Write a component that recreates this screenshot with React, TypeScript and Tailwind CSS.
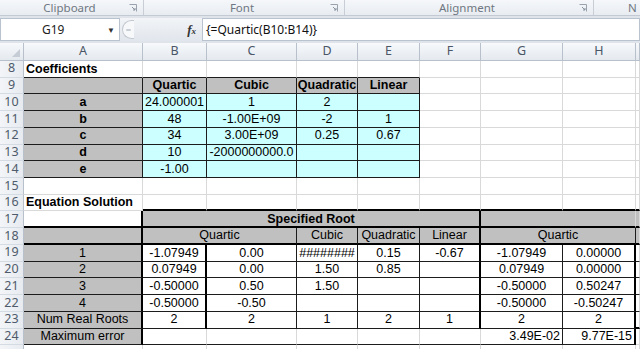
import React from "react";

type Cell = {
  t?: string;
  s?: number;
  bg?: "g" | "c" | "w";
  b?: boolean;
  al?: "l" | "c" | "r";
  r?: 0 | 1 | 2;
  d?: 0 | 1 | 2;
};

const RIGHT = [
  "border-r border-r-[#d9d9d9]",
  "border-r border-r-[#1c1c1c]",
  "border-r-2 border-r-black",
];
const BOTTOM = [
  "border-b border-b-[#d9d9d9]",
  "border-b border-b-[#1c1c1c]",
  "border-b-2 border-b-black",
];
const BG = { g: "bg-[#c0c0c0]", c: "bg-[#ccffff]", w: "bg-white" };
const ALIGN = { l: "justify-start pl-[2px]", c: "justify-center", r: "justify-end pr-[2px]" };

const e = (n: number, d: 0 | 1 | 2 = 0): Cell[] => Array.from({ length: n }, () => ({ d }));

// rows 8..25, each row covers columns A..H plus the sliver of I
const rows: { n: number; cells: Cell[] }[] = [
  { n: 8, cells: [{ t: "Coefficients", b: true, al: "l", d: 1 }, { d: 1 }, { d: 1 }, { d: 1 }, { d: 1 }, ...e(4)] },
  {
    n: 9,
    cells: [
      { bg: "g", r: 1, d: 1 },
      { t: "Quartic", bg: "g", b: true, r: 1, d: 1 },
      { t: "Cubic", bg: "g", b: true, r: 1, d: 1 },
      { t: "Quadratic", bg: "g", b: true, r: 1, d: 1 },
      { t: "Linear", bg: "g", b: true, r: 1, d: 1 },
      ...e(4),
    ],
  },
  ...[
    ["a", "24.000001", "1", "2", ""],
    ["b", "48", "-1.00E+09", "-2", "1"],
    ["c", "34", "3.00E+09", "0.25", "0.67"],
    ["d", "10", "-2000000000.0", "", ""],
    ["e", "-1.00", "", "", ""],
  ].map((v, i) => ({
    n: 10 + i,
    cells: [
      { t: v[0], bg: "g", b: true, r: 1, d: 1 } as Cell,
      ...v.slice(1).map((t) => ({ t, bg: "c", r: 1, d: 1 }) as Cell),
      ...e(4),
    ],
  })),
  { n: 15, cells: e(9) },
  { n: 16, cells: [{ t: "Equation Solution", b: true, al: "l", d: 0 }, ...e(8, 2)] },
  {
    n: 17,
    cells: [
      { r: 2, d: 2 },
      { t: "Specified Root", s: 5, bg: "g", b: true, r: 2, d: 2 },
      { s: 2, bg: "g", r: 0, d: 2 },
      { bg: "g", d: 2 },
    ],
  },
  {
    n: 18,
    cells: [
      { bg: "g", r: 2, d: 2 },
      { t: "Quartic", s: 2, bg: "g", r: 1, d: 2 },
      { t: "Cubic", bg: "g", r: 1, d: 2 },
      { t: "Quadratic", bg: "g", r: 1, d: 2 },
      { t: "Linear", bg: "g", r: 2, d: 2 },
      { t: "Quartic", s: 2, bg: "g", r: 1, d: 2 },
      { bg: "g", d: 2 },
    ],
  },
  ...[
    ["1", "-1.07949", "0.00", "########", "0.15", "-0.67", "-1.07949", "0.00000"],
    ["2", "0.07949", "0.00", "1.50", "0.85", "", "0.07949", "0.00000"],
    ["3", "-0.50000", "0.50", "1.50", "", "", "-0.50000", "0.50247"],
    ["4", "-0.50000", "-0.50", "", "", "", "-0.50000", "-0.50247"],
    ["Num Real Roots", "2", "2", "1", "2", "1", "2", "2"],
  ].map((v, i) => ({
    n: 19 + i,
    cells: [
      { t: v[0], bg: "g", r: 2, d: 1 } as Cell,
      { t: v[1], bg: "w", r: 2, d: 1 } as Cell,
      { t: v[2], bg: "w", r: 1, d: 1 } as Cell,
      { t: v[3], bg: "w", r: 1, d: 1 } as Cell,
      { t: v[4], bg: "w", r: 1, d: 1 } as Cell,
      { t: v[5], bg: "w", r: 2, d: 1 } as Cell,
      { t: v[6], bg: "w", r: 1, d: 1 } as Cell,
      { t: v[7], bg: "w", r: 2, d: 1 } as Cell,
      { bg: "w", d: i === 4 ? 2 : 1 } as Cell,
    ],
  })),
  {
    n: 24,
    cells: [
      { t: "Maximum error", bg: "g", r: 2, d: 1 },
      { d: 1 },
      { d: 1 },
      { d: 1 },
      { d: 1 },
      { d: 1 },
      { t: "3.49E-02", al: "r", r: 1, d: 1 },
      { t: "9.77E-15", al: "r", r: 2, d: 1 },
      { d: 0 },
    ],
  },
  { n: 25, cells: e(9) },
];

const COLS = ["A", "B", "C", "D", "E", "F", "G", "H", ""];

function Launcher() {
  return (
    <svg width="8" height="8" viewBox="0 0 8 8" className="ml-auto mr-[6px]">
      <path d="M0.5 0.5h7v7" fill="none" stroke="#9aa3ad" />
      <path d="M3 3l3 3M6 4v2H4" fill="none" stroke="#8a939e" />
    </svg>
  );
}

function Group({ w, label }: { w: number; label: string }) {
  return (
    <div
      className="flex h-full items-center border-r border-r-[#c9ced6] shrink-0"
      style={{ width: w }}
    >
      <span className="flex-1 text-center pl-[10px]">{label}</span>
      <Launcher />
    </div>
  );
}

export default function App() {
  return (
    <div className="w-[640px] h-[349px] overflow-hidden bg-white font-['Liberation_Sans',Arial,sans-serif] text-[12.5px] text-black">
      {/* ribbon group labels */}
      <div className="flex h-[16px] items-center bg-gradient-to-b from-[#f5f7fa] to-[#e8ecf1] border-b border-b-[#c3cad3] font-['Noto_Sans',sans-serif] text-[11.5px] text-[#6f7782]">
        <Group w={144} label="Clipboard" />
        <Group w={201} label="Font" />
        <Group w={249} label="Alignment" />
        <div className="flex-1 pl-[34px]">N</div>
      </div>
      <div className="h-[2px] bg-[#dfe4ea]" />

      {/* formula bar */}
      <div className="flex h-[23px] items-stretch bg-[#e3e8ee] font-['Noto_Sans',sans-serif] text-[12px]">
        <div className="flex w-[120px] items-center bg-white border border-[#b9c3cf]">
          <span className="flex-1 pl-[41px] text-[#222]">G19</span>
          <span className="mr-[4px] text-[8px] text-[#333]">▼</span>
        </div>
        <div className="flex w-[82px] items-center bg-gradient-to-b from-[#f2f4f7] to-[#e1e6ec]">
          <div className="ml-[2px] h-[19px] w-[12px] rounded-l-full border border-r-0 border-[#c2c8d0] bg-[#f7f8fa] flex items-center pl-[3px]">
            <div className="h-[2px] w-[5px] rounded-full bg-[#c8ced6]" />
          </div>
          <span className="ml-auto mr-[6px] font-['Liberation_Serif',serif] italic font-bold text-[13px] text-[#333]">
            f<span className="text-[9px]">x</span>
          </span>
        </div>
        <div className="flex flex-1 items-center bg-white border border-[#b9c3cf] pl-[3px] text-[#111]">
          {"{=Quartic(B10:B14)}"}
        </div>
      </div>
      <div className="h-[2px] bg-[#dfe4ea]" />

      {/* sheet */}
      <div className="grid grid-cols-[24px_119px_64px_90px_61px_62px_61px_82px_73px_1fr] grid-rows-[18px_repeat(18,16.72px)]">
        {/* column header row */}
        <div className="relative bg-gradient-to-b from-[#f7f9fb] to-[#e4e9ef] border-r border-b border-[#b7c0cb]">
          <svg width="8" height="8" className="absolute right-[3px] bottom-[3px]">
            <path d="M8 0V8H0z" fill="#c5ccd5" />
          </svg>
        </div>
        {COLS.map((c, i) => (
          <div
            key={i}
            className="flex items-center justify-center bg-gradient-to-b from-[#f7f9fb] to-[#e4e9ef] border-r border-b border-[#b7c0cb] font-['Noto_Sans',sans-serif] text-[12.5px] text-[#4a5566]"
          >
            {c}
          </div>
        ))}

        {rows.map((row) => (
          <React.Fragment key={row.n}>
            <div className="flex items-center justify-center bg-gradient-to-r from-[#f3f5f8] to-[#e7ebf0] border-r border-b border-r-[#b7c0cb] border-b-[#d5dbe2] font-['Noto_Sans',sans-serif] text-[12.5px] text-[#4f5b6b]">
              {row.n < 25 ? row.n : ""}
            </div>
            {row.cells.map((c, i) => (
              <div
                key={i}
                className={[
                  "flex items-center overflow-hidden whitespace-nowrap leading-none",
                  c.s === 5 ? "col-span-5" : c.s === 2 ? "col-span-2" : "",
                  c.bg ? BG[c.bg] : "bg-white",
                  c.b ? "font-bold" : "",
                  ALIGN[c.al ?? "c"],
                  RIGHT[c.r ?? 0],
                  BOTTOM[c.d ?? 0],
                ].join(" ")}
              >
                {c.t}
              </div>
            ))}
          </React.Fragment>
        ))}
      </div>
    </div>
  );
}
